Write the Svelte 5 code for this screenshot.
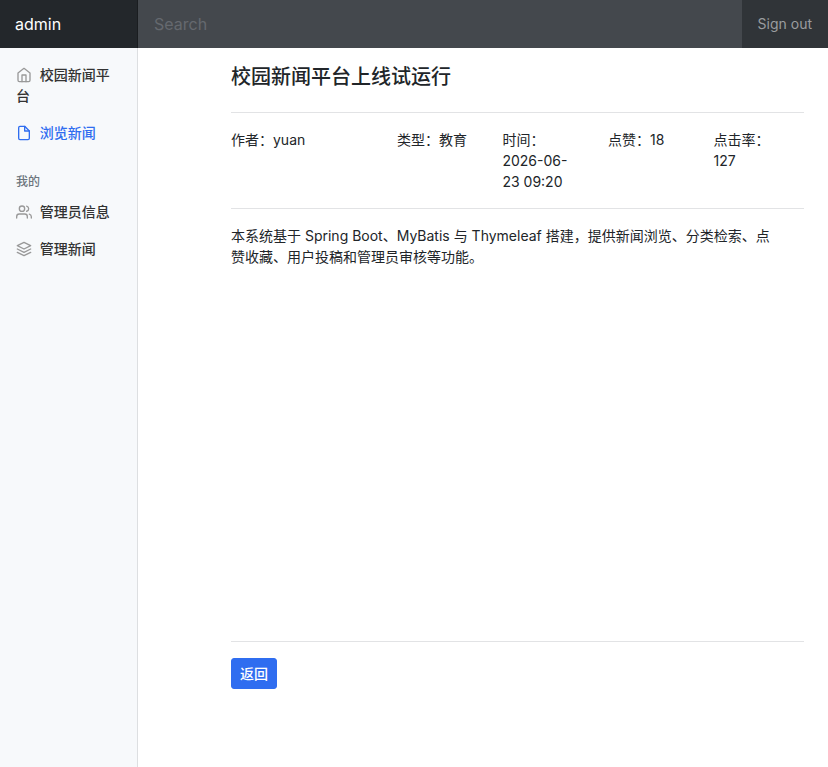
<script>
  let search = $state('');

  const news = {
    title: '校园新闻平台上线试运行',
    content:
      '本系统基于 Spring Boot、MyBatis 与 Thymeleaf 搭建，提供新闻浏览、分类检索、点赞收藏、用户投稿和管理员审核等功能。',
    meta: [
      { label: '作者：', value: 'yuan' },
      { label: '类型：', value: '教育' },
      { label: '时间：', value: '2026-06-23 09:20' },
      { label: '点赞：', value: '18' },
      { label: '点击率：', value: '127' },
    ],
  };

  const mainLinks = [
    { text: '校园新闻平台', icon: 'home' },
    { text: '浏览新闻', icon: 'file', active: true },
  ];

  const myLinks = [
    { text: '管理员信息', icon: 'users' },
    { text: '管理新闻', icon: 'layers' },
  ];
</script>

{#snippet navItem(link)}
  <li>
    <a class="nav-link" class:active={link.active} href="#{link.icon}">
      <svg class="feather" viewBox="0 0 24 24" aria-hidden="true">
        {#if link.icon === 'home'}
          <path d="M3 9l9-7 9 7v11a2 2 0 0 1-2 2H5a2 2 0 0 1-2-2z" />
          <polyline points="9 22 9 12 15 12 15 22" />
        {:else if link.icon === 'file'}
          <path d="M13 2H6a2 2 0 0 0-2 2v16a2 2 0 0 0 2 2h12a2 2 0 0 0 2-2V9z" />
          <polyline points="13 2 13 9 20 9" />
        {:else if link.icon === 'users'}
          <path d="M17 21v-2a4 4 0 0 0-4-4H5a4 4 0 0 0-4 4v2" />
          <circle cx="9" cy="7" r="4" />
          <path d="M23 21v-2a4 4 0 0 0-3-3.87" />
          <path d="M16 3.13a4 4 0 0 1 0 7.75" />
        {:else}
          <polygon points="12 2 2 7 12 12 22 7 12 2" />
          <polyline points="2 17 12 22 22 17" />
          <polyline points="2 12 12 17 22 12" />
        {/if}
      </svg>
      {link.text}
    </a>
  </li>
{/snippet}

<div class="page">
  <header class="navbar">
    <a class="brand" href="#admin">admin</a>
    <input type="text" placeholder="Search" aria-label="Search" bind:value={search} />
    <a class="sign-out" href="#signout">Sign out</a>
  </header>

  <div class="body">
    <nav class="sidebar">
      <ul>
        {#each mainLinks as link}
          {@render navItem(link)}
        {/each}
      </ul>
      <h6>我的</h6>
      <ul>
        {#each myLinks as link}
          {@render navItem(link)}
        {/each}
      </ul>
    </nav>

    <main>
      <h1>{news.title}</h1>
      <hr />
      <div class="meta">
        {#each news.meta as item}
          <div>{item.label}<span>{item.value}</span></div>
        {/each}
      </div>
      <hr />
      <div class="content">{news.content}</div>
      <hr />
      <button type="button">返回</button>
    </main>
  </div>
</div>

<style>
  :global(body) {
    margin: 0;
  }

  .page {
    display: flex;
    flex-direction: column;
    min-height: 100vh;
    font-family: Inter, "Noto Sans CJK SC", sans-serif;
    font-size: 14px;
    line-height: 21px;
    color: #212529;
    background: #fff;
  }

  .page,
  .page * {
    box-sizing: border-box;
  }

  .navbar {
    display: flex;
    background: #303438;
  }

  .brand {
    width: 16.6667%;
    padding: 12px 15px;
    font-size: 16px;
    line-height: 24px;
    color: #fff;
    text-decoration: none;
    background: #23272b;
    box-shadow: inset -1px 0 0 rgba(0, 0, 0, 0.25);
  }

  input {
    flex: 1;
    min-width: 0;
    padding: 12px 16px;
    border: 0;
    border-radius: 0;
    font: inherit;
    font-size: 16px;
    line-height: 24px;
    color: #fff;
    background: #44484d;
  }

  input::placeholder {
    color: #65696f;
    opacity: 1;
  }

  .sign-out {
    padding: 13px 16px 14px;
    color: #9a9c9f;
    text-decoration: none;
  }

  .body {
    display: flex;
    flex: 1;
  }

  .sidebar {
    width: 16.6667%;
    padding-top: 8px;
    background: #f7f9fb;
    box-shadow: inset -1px 0 0 rgba(0, 0, 0, 0.1);
  }

  ul {
    margin: 0;
    padding: 0;
    list-style: none;
  }

  .nav-link {
    display: block;
    padding: 8px 16px;
    font-weight: 500;
    color: #333;
    text-decoration: none;
  }

  .feather {
    width: 16px;
    height: 16px;
    margin-right: 4px;
    vertical-align: text-bottom;
    fill: none;
    stroke: #999;
    stroke-width: 2;
    stroke-linecap: round;
    stroke-linejoin: round;
  }

  .nav-link.active {
    color: #2f6df0;
  }

  .active .feather {
    stroke: currentColor;
  }

  h6 {
    margin: 24px 16px 4px;
    font-size: 12px;
    font-weight: 500;
    line-height: 14px;
    color: #6c757d;
  }

  main {
    width: 75%;
    margin-left: auto;
    padding: 14px 24px 16px;
  }

  h1 {
    margin: 0 0 20px;
    font-size: 20px;
    font-weight: 500;
    line-height: 30px;
  }

  hr {
    margin: 16px 0;
    border: 0;
    border-top: 1px solid #e2e3e5;
  }

  .meta {
    display: grid;
    grid-template-columns: 9fr repeat(4, 5fr);
    gap: 30px;
    padding-right: 15px;
  }

  .content {
    min-height: 400px;
    padding-right: 30px;
  }

  button {
    padding: 4px 8px;
    border: 1px solid #2f6df0;
    border-radius: 3px;
    font: inherit;
    font-weight: 500;
    color: #fff;
    background: #2f6df0;
    cursor: pointer;
  }
</style>
